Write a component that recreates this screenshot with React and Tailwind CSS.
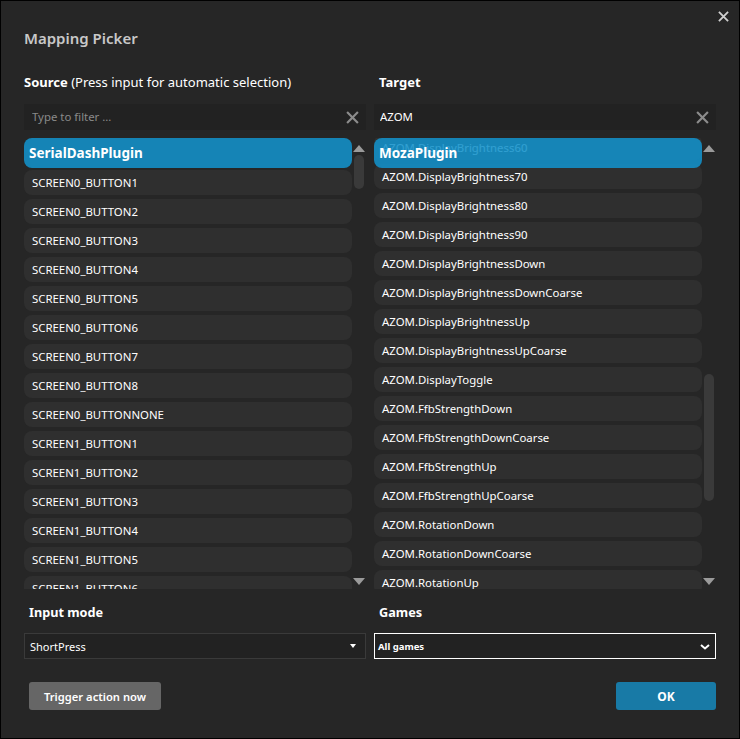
import { useState } from 'react'

const SOURCE_ROWS = [
  'SCREEN0_BUTTON1', 'SCREEN0_BUTTON2', 'SCREEN0_BUTTON3', 'SCREEN0_BUTTON4',
  'SCREEN0_BUTTON5', 'SCREEN0_BUTTON6', 'SCREEN0_BUTTON7', 'SCREEN0_BUTTON8',
  'SCREEN0_BUTTONNONE', 'SCREEN1_BUTTON1', 'SCREEN1_BUTTON2', 'SCREEN1_BUTTON3',
  'SCREEN1_BUTTON4', 'SCREEN1_BUTTON5', 'SCREEN1_BUTTON6',
]

const TARGET_ROWS = [
  'AZOM.DisplayBrightness60', 'AZOM.DisplayBrightness70', 'AZOM.DisplayBrightness80',
  'AZOM.DisplayBrightness90', 'AZOM.DisplayBrightnessDown', 'AZOM.DisplayBrightnessDownCoarse',
  'AZOM.DisplayBrightnessUp', 'AZOM.DisplayBrightnessUpCoarse', 'AZOM.DisplayToggle',
  'AZOM.FfbStrengthDown', 'AZOM.FfbStrengthDownCoarse', 'AZOM.FfbStrengthUp',
  'AZOM.FfbStrengthUpCoarse', 'AZOM.RotationDown', 'AZOM.RotationDownCoarse', 'AZOM.RotationUp',
]

function CloseGlyph({ size, className }) {
  return (
    <svg width={size} height={size} viewBox="0 0 12 12" className={className}>
      <path d="M1 1l10 10M11 1L1 11" stroke="currentColor" strokeWidth="2" fill="none" />
    </svg>
  )
}

function FilterBox({ initial = '', placeholder, padding }) {
  const [value, setValue] = useState(initial)
  return (
    <div className={`flex h-[26px] items-center justify-between bg-[#222222] pr-[7px] ${padding}`}>
      <input
        value={value}
        onChange={e => setValue(e.target.value)}
        placeholder={placeholder}
        className="min-w-0 flex-1 bg-transparent text-[11.4px] text-white outline-none placeholder:text-[#8a8a8a]"
      />
      <button onClick={() => setValue('')} className="text-[#8c8c8c]">
        <CloseGlyph size={13} />
      </button>
    </div>
  )
}

function PickerList({ header, rows, shift, thumbTop, thumbHeight }) {
  return (
    <div className="flex h-[451px]">
      <div className="relative w-[328px] overflow-hidden">
        <div className={shift}>
          {rows.map(r => (
            <div key={r} className="mb-1 flex h-[25px] items-center rounded-lg bg-[#2f2f2f] px-2 text-[11.4px] text-white">
              {r}
            </div>
          ))}
        </div>
        {/* sticky group header, slightly see-through */}
        <div className="absolute inset-x-0 top-0 flex h-[30px] items-center rounded-lg bg-[#1392cb]/[0.88] px-[5px] text-[13.5px] font-bold text-white">
          {header}
        </div>
      </div>
      <div className="flex w-[14px] flex-col items-center">
        <svg width="12" height="7" viewBox="0 0 12 7" className="mt-[7px] shrink-0 fill-[#9a9a9a]"><path d="M6 0l6 7H0z" /></svg>
        <div className="relative w-full flex-1">
          <div className={`absolute left-[2px] w-[10px] rounded-full bg-[#3a3a3a] ${thumbTop} ${thumbHeight}`} />
        </div>
        <svg width="12" height="7" viewBox="0 0 12 7" className="mb-[4px] shrink-0 fill-[#9a9a9a]"><path d="M0 0h12L6 7z" /></svg>
      </div>
    </div>
  )
}

export default function App() {
  return (
    <div className="relative h-[739px] w-[740px] border border-black bg-[#262626] font-['Noto_Sans','Open_Sans',sans-serif] text-white">
      <button className="absolute right-[10px] top-[10px] text-[#cfcfcf]">
        <CloseGlyph size={11} />
      </button>

      <div className="px-[23px] pt-[27px]">
        <h1 className="h-[20px] text-[15px] font-semibold leading-[20px] text-[#c8c8c8]">Mapping Picker</h1>

        <div className="mt-[24px] grid grid-cols-[342px_342px] gap-x-[8px]">
          <div className="h-[20px] text-[13px] leading-[20px]">
            <span className="font-bold">Source</span> (Press input for automatic selection)
          </div>
          <div className="h-[20px] pl-[5px] text-[13px] font-bold leading-[20px]">Target</div>

          <div className="mt-[12px]"><FilterBox placeholder="Type to filter ..." padding="pl-2" /></div>
          <div className="mt-[12px]"><FilterBox initial="AZOM" padding="pl-[6px]" /></div>

          <div className="mt-[8px]">
            <PickerList header="SerialDashPlugin" rows={SOURCE_ROWS} shift="pt-[32px]" thumbTop="top-[3px]" thumbHeight="h-[34px]" />
          </div>
          <div className="mt-[8px]">
            <PickerList header="MozaPlugin" rows={TARGET_ROWS} shift="-mt-[3px]" thumbTop="top-[222px]" thumbHeight="h-[127px]" />
          </div>

          <div className="mt-[13px] h-[20px] pl-[5px] text-[12.7px] font-bold leading-[20px]">Input mode</div>
          <div className="mt-[13px] h-[20px] pl-[5px] text-[12.7px] font-bold leading-[20px]">Games</div>

          <div className="mt-[11px] flex h-[26px] items-center justify-between border border-[#3a3a3a] bg-[#222222] pl-[5px] pr-[9px] text-[11px]">
            <span className="translate-y-px">ShortPress</span>
            <svg width="6" height="4" viewBox="0 0 6 4" className="fill-white"><path d="M0 0h6L3 4z" /></svg>
          </div>
          <div className="mt-[11px] flex h-[26px] items-center justify-between border border-white bg-[#222222] pl-[3px] pr-[5px] text-[9.5px] font-bold">
            <span className="translate-y-px">All games</span>
            <svg width="10" height="6" viewBox="0 0 10 6" className="translate-y-px">
              <path d="M1 1l4 3.5L9 1" stroke="white" strokeWidth="2" fill="none" />
            </svg>
          </div>
        </div>

        <div className="mt-[23px] flex items-center justify-between pl-[5px]">
          <button className="h-[28px] w-[132px] rounded-[3px] bg-[#666666] pt-[2px] text-[11.2px] font-semibold text-white">Trigger action now</button>
          <button className="h-[28px] w-[100px] rounded-[3px] bg-[#187aa6] pt-[2px] text-[12px] font-bold text-white">OK</button>
        </div>
      </div>
    </div>
  )
}
